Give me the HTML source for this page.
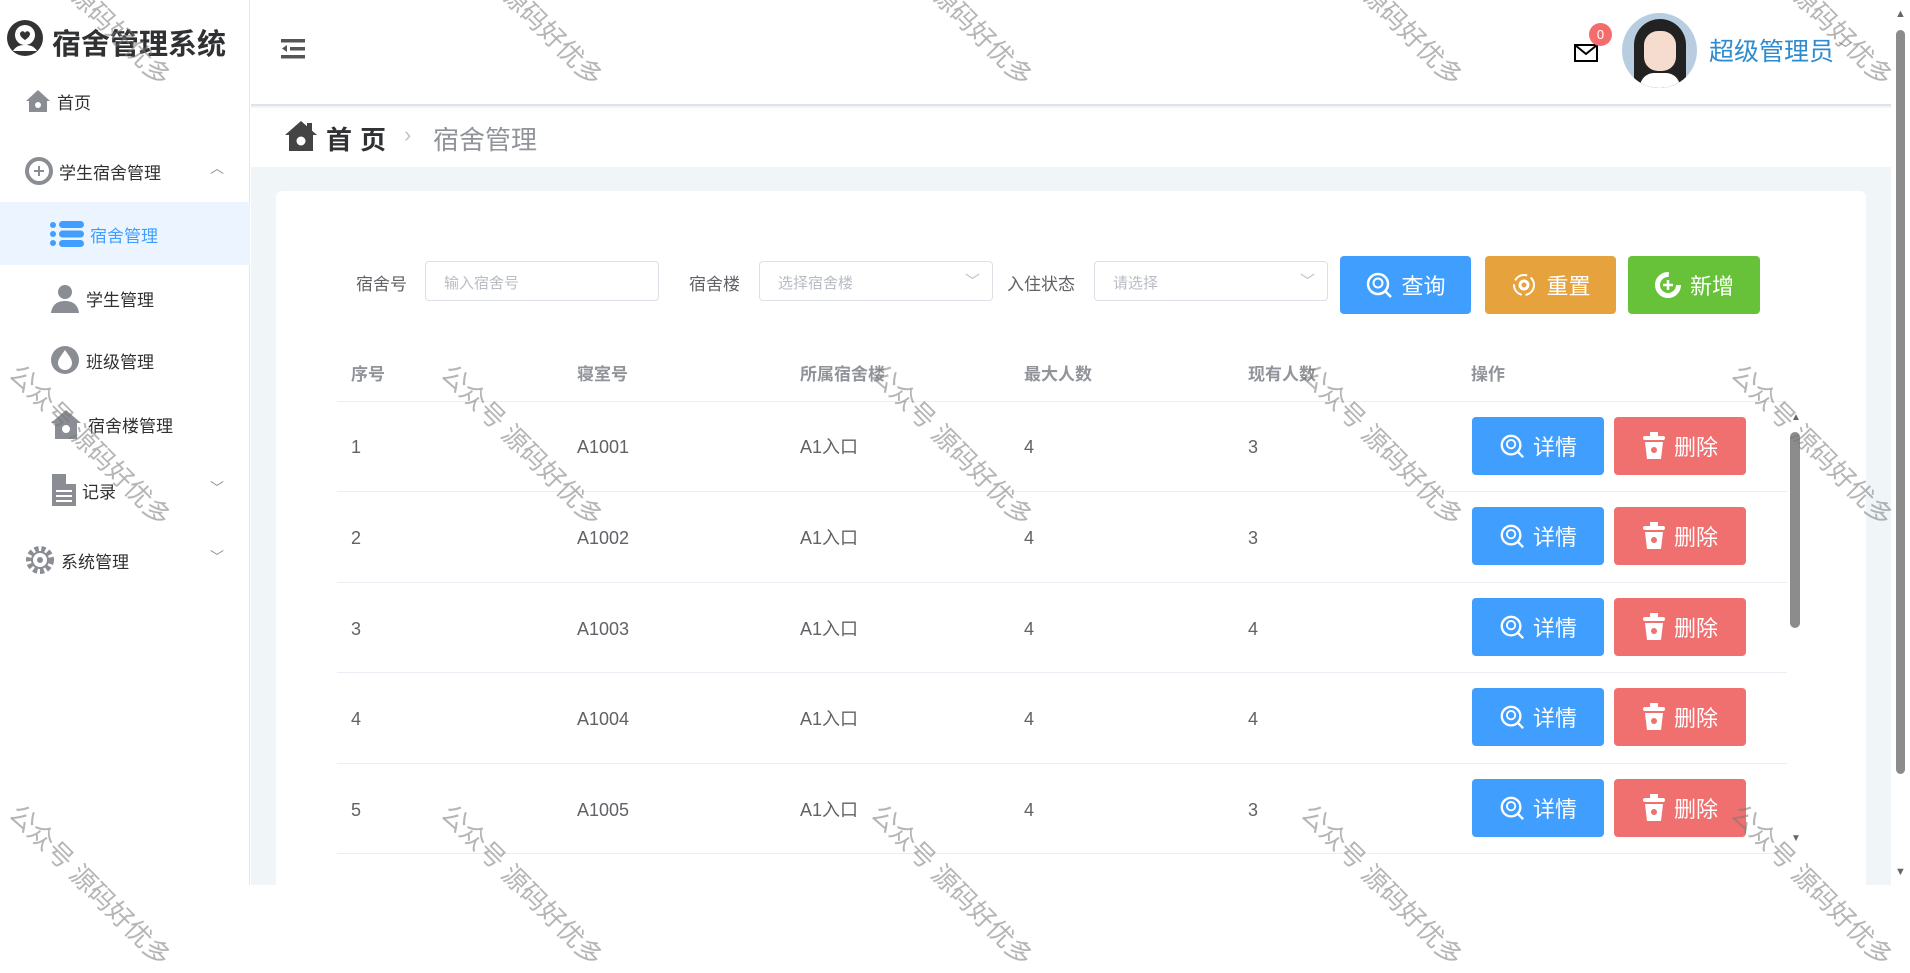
<!DOCTYPE html>
<html><head><meta charset="utf-8"><style>
*{box-sizing:border-box;margin:0;padding:0}
body{width:1910px;height:885px;overflow:hidden;background:#fff;font-family:"Liberation Sans","Noto Sans CJK SC",sans-serif;position:relative;color:#606266}
.abs{position:absolute}
.side{left:0;top:0;width:250px;height:885px;border-right:1px solid #e6e6e6;background:#fff}
.mi{position:absolute;font-size:17px;color:#303133;display:flex;align-items:center;gap:6px}
.main{left:251px;top:0;width:1640px;height:885px;background:#f0f5f8}
.hdr{left:251px;top:0;width:1640px;height:106px;background:#fff;border-bottom:2px solid #dde3e8}
.bc{left:251px;top:108px;width:1640px;height:59px;background:#fff}
.card{left:276px;top:191px;width:1590px;height:720px;background:#fff;border-radius:6px}
.lbl{font-size:17px;color:#606266;top:270px}
.inp{top:261px;height:40px;border:1px solid #dcdfe6;border-radius:4px;font-size:15px;color:#b8bcc4;padding:10px 18px}
.btn{position:absolute;height:58px;border-radius:4px;color:#fff;font-size:22px;display:flex;align-items:center;justify-content:center;gap:8px}
.blue{background:#409eff}.org{background:#e6a23c}.grn{background:#67c23a}.red{background:#f06f6f}
.th{top:360px;font-size:17px;font-weight:bold;color:#909399}
.td{font-size:18px;color:#606266;line-height:24px;height:24px;display:flex;align-items:center}
.line{left:337px;width:1450px;height:1px;background:#ebeef5}
.wm{position:absolute;font-size:26px;color:rgba(120,120,120,.55);transform:rotate(45deg);transform-origin:left top;white-space:nowrap}
</style></head><body>
<div class="abs main"></div>
<div class="abs hdr"></div>
<div class="abs bc"></div>
<div class="abs side"></div>

<svg class="abs" style="left:6px;top:19px" width="38" height="38" viewBox="0 0 38 38"><circle cx="19" cy="19" r="18" fill="#333"/><circle cx="19" cy="16" r="10" fill="#fff"/><path d="M14 15c0-3 4-4 5-1 1-3 5-2 5 1 0 3-5 6-5 6s-5-3-5-6z" fill="#333"/><path d="M7 32c3-5 7-6 12-6s9 1 12 6" fill="#fff"/></svg>
<div class="abs" style="left:52px;top:21px;font-size:29px;font-weight:bold;color:#303133">宿舍管理系统</div>

<div class="abs" style="left:0;top:202px;width:250px;height:63px;background:#ecf5ff"></div>
<div class="mi" style="left:25px;top:88px"><svg width="26" height="26" viewBox="0 0 26 26"><path d="M13 2L1 13h3v11h18V13h3z" fill="#8a8d93"/><circle cx="13" cy="17" r="3" fill="#fff"/></svg><span>首页</span></div>
<div class="mi" style="left:25px;top:157px"><svg width="28" height="28" viewBox="0 0 28 28"><circle cx="14" cy="14" r="12" fill="none" stroke="#8a8d93" stroke-width="4"/><path d="M14 9v10M9 14h10" stroke="#8a8d93" stroke-width="2"/></svg><span>学生宿舍管理</span></div>
<div class="abs" style="left:210px;top:158px;color:#909399;font-size:14px">︿</div>
<div class="mi" style="left:50px;top:220px;color:#409eff"><svg width="34" height="28" viewBox="0 0 34 28"><circle cx="3" cy="5" r="3" fill="#409eff"/><circle cx="3" cy="14" r="3" fill="#409eff"/><circle cx="3" cy="23" r="3" fill="#409eff"/><rect x="9" y="1" width="25" height="7" rx="3.5" fill="#409eff"/><rect x="9" y="10.5" width="25" height="7" rx="3.5" fill="#409eff"/><rect x="9" y="20" width="25" height="7" rx="3.5" fill="#409eff"/></svg><span>宿舍管理</span></div>
<div class="mi" style="left:50px;top:283px"><svg width="30" height="30" viewBox="0 0 30 30"><circle cx="15" cy="9" r="7" fill="#8a8d93"/><path d="M1 30c1-8 6-12 14-12s13 4 14 12z" fill="#8a8d93"/></svg><span>学生管理</span></div>
<div class="mi" style="left:50px;top:345px"><svg width="30" height="30" viewBox="0 0 30 30"><circle cx="15" cy="15" r="14" fill="#8a8d93"/><path d="M15 5c-4 6-7 9-7 13a7 7 0 0014 0c0-4-3-7-7-13z" fill="#fff"/></svg><span>班级管理</span></div>
<div class="mi" style="left:50px;top:409px"><svg width="32" height="30" viewBox="0 0 32 30"><path d="M16 1L1 14h4v16h22V14h4z" fill="#8a8d93"/><circle cx="16" cy="20" r="4" fill="#fff"/></svg><span>宿舍楼管理</span></div>
<div class="mi" style="left:52px;top:474px"><svg width="24" height="32" viewBox="0 0 24 32"><rect x="0" y="0" width="24" height="32" fill="#8a8d93"/><rect x="4" y="16" width="16" height="2" fill="#fff"/><rect x="4" y="21" width="16" height="2" fill="#fff"/><rect x="4" y="26" width="16" height="2" fill="#fff"/><rect x="14" y="0" width="10" height="10" fill="#fff"/></svg><span>记录</span></div>
<div class="abs" style="left:210px;top:478px;color:#909399;font-size:14px">﹀</div>
<div class="mi" style="left:25px;top:545px"><svg width="30" height="30" viewBox="0 0 30 30"><circle cx="15" cy="15" r="11" fill="none" stroke="#8a8d93" stroke-width="6" stroke-dasharray="4 2.6"/><circle cx="15" cy="15" r="8" fill="none" stroke="#8a8d93" stroke-width="2"/><circle cx="15" cy="15" r="3" fill="#8a8d93"/></svg><span>系统管理</span></div>
<div class="abs" style="left:210px;top:547px;color:#909399;font-size:14px">﹀</div>

<svg class="abs" style="left:281px;top:39px" width="24" height="20" viewBox="0 0 24 20"><rect x="0" y="0" width="24" height="3.5" fill="#555"/><rect x="9" y="8" width="15" height="3.5" fill="#555"/><rect x="0" y="16" width="24" height="3.5" fill="#555"/><path d="M6 6v7l-5-3.5z" fill="#555"/></svg>
<svg class="abs" style="left:1574px;top:44px" width="24" height="18" viewBox="0 0 24 18"><rect x="1" y="1" width="22" height="16" fill="none" stroke="#000" stroke-width="2"/><path d="M1 1l11 9 11-9" fill="none" stroke="#000" stroke-width="2"/></svg>
<div class="abs" style="left:1589px;top:23px;width:23px;height:23px;border-radius:50%;background:#f56c6c;color:#fff;font-size:13px;text-align:center;line-height:23px">0</div>
<div class="abs" style="left:1622px;top:13px;width:75px;height:75px;border-radius:50%;background:#b9cde0;overflow:hidden"><div class="abs" style="left:12px;top:6px;width:52px;height:72px;border-radius:26px 26px 10px 10px;background:#222"></div><div class="abs" style="left:22px;top:18px;width:32px;height:40px;border-radius:14px;background:#f6dccf"></div><div class="abs" style="left:18px;top:60px;width:40px;height:20px;border-radius:14px 14px 0 0;background:#fff"></div></div>
<div class="abs" style="left:1709px;top:32px;font-size:25px;color:#2f8bd0">超级管理员</div>
<div class="abs" style="left:1838px;top:38px;font-size:15px;color:#909399">﹀</div>

<svg class="abs" style="left:285px;top:120px" width="32" height="32" viewBox="0 0 32 32"><path d="M16 1L0 15h4v16h24V15h4z" fill="#444"/><circle cx="16" cy="21" r="4.5" fill="#fff"/><rect x="22" y="3" width="5" height="8" fill="#444"/></svg>
<div class="abs" style="left:326px;top:120px;font-size:26px;font-weight:bold;color:#303133;letter-spacing:8px">首页</div>
<div class="abs" style="left:404px;top:122px;font-size:22px;color:#c0c4cc">›</div>
<div class="abs" style="left:433px;top:120px;font-size:26px;color:#909399">宿舍管理</div>

<div class="abs card"></div>
<div class="abs lbl" style="left:356px">宿舍号</div>
<div class="abs inp" style="left:425px;width:234px">输入宿舍号</div>
<div class="abs lbl" style="left:689px">宿舍楼</div>
<div class="abs inp" style="left:759px;width:234px">选择宿舍楼<span style="position:absolute;right:12px;top:8px">﹀</span></div>
<div class="abs lbl" style="left:1007px">入住状态</div>
<div class="abs inp" style="left:1094px;width:234px">请选择<span style="position:absolute;right:12px;top:8px">﹀</span></div>

<div class="btn blue" style="left:1340px;top:256px;width:131px"><svg width="28" height="28" viewBox="0 0 28 28"><circle cx="13" cy="13" r="10" fill="none" stroke="#fff" stroke-width="2.5"/><circle cx="13" cy="12" r="4.5" fill="none" stroke="#fff" stroke-width="2"/><path d="M20 20l6 6" stroke="#fff" stroke-width="2.5"/></svg>查询</div>
<div class="btn org" style="left:1485px;top:256px;width:131px"><svg width="28" height="28" viewBox="0 0 28 28"><circle cx="14" cy="14" r="10" fill="none" stroke="#fff" stroke-width="2" stroke-dasharray="14 4"/><circle cx="14" cy="14" r="4" fill="none" stroke="#fff" stroke-width="3"/></svg>重置</div>
<div class="btn grn" style="left:1628px;top:256px;width:132px"><svg width="28" height="28" viewBox="0 0 28 28"><circle cx="14" cy="14" r="10.5" fill="none" stroke="#fff" stroke-width="5" stroke-dasharray="50 16"/><path d="M14 9v10M9 14h10" stroke="#fff" stroke-width="2.5"/></svg>新增</div>

<div class="abs th" style="left:351px">序号</div>
<div class="abs th" style="left:577px">寝室号</div>
<div class="abs th" style="left:800px">所属宿舍楼</div>
<div class="abs th" style="left:1024px">最大人数</div>
<div class="abs th" style="left:1248px">现有人数</div>
<div class="abs th" style="left:1471px">操作</div>
<div class="abs line" style="top:401px"></div>
<div class="abs line" style="top:491px"></div>
<div class="abs line" style="top:582px"></div>
<div class="abs line" style="top:672px"></div>
<div class="abs line" style="top:763px"></div>
<div class="abs line" style="top:853px"></div>

<div class="abs td" style="left:351px;top:435px">1</div><div class="abs td" style="left:577px;top:435px">A1001</div><div class="abs td" style="left:800px;top:435px">A1入口</div><div class="abs td" style="left:1024px;top:435px">4</div><div class="abs td" style="left:1248px;top:435px">3</div>
<div class="abs td" style="left:351px;top:526px">2</div><div class="abs td" style="left:577px;top:526px">A1002</div><div class="abs td" style="left:800px;top:526px">A1入口</div><div class="abs td" style="left:1024px;top:526px">4</div><div class="abs td" style="left:1248px;top:526px">3</div>
<div class="abs td" style="left:351px;top:617px">3</div><div class="abs td" style="left:577px;top:617px">A1003</div><div class="abs td" style="left:800px;top:617px">A1入口</div><div class="abs td" style="left:1024px;top:617px">4</div><div class="abs td" style="left:1248px;top:617px">4</div>
<div class="abs td" style="left:351px;top:707px">4</div><div class="abs td" style="left:577px;top:707px">A1004</div><div class="abs td" style="left:800px;top:707px">A1入口</div><div class="abs td" style="left:1024px;top:707px">4</div><div class="abs td" style="left:1248px;top:707px">4</div>
<div class="abs td" style="left:351px;top:798px">5</div><div class="abs td" style="left:577px;top:798px">A1005</div><div class="abs td" style="left:800px;top:798px">A1入口</div><div class="abs td" style="left:1024px;top:798px">4</div><div class="abs td" style="left:1248px;top:798px">3</div>

<div class="btn blue" style="left:1472px;top:417px;width:132px"><svg width="26" height="26" viewBox="0 0 28 28"><circle cx="13" cy="13" r="10" fill="none" stroke="#fff" stroke-width="2.5"/><circle cx="13" cy="12" r="4.5" fill="none" stroke="#fff" stroke-width="2"/><path d="M20 20l6 6" stroke="#fff" stroke-width="2.5"/></svg>详情</div>
<div class="btn red" style="left:1614px;top:417px;width:132px"><svg width="24" height="28" viewBox="0 0 24 28"><rect x="1" y="4" width="22" height="4" rx="2" fill="#fff"/><rect x="8" y="0" width="8" height="4" fill="#fff"/><path d="M3 10h18l-2 17H5z" fill="#fff"/><circle cx="12" cy="18" r="3" fill="#f06f6f"/></svg>删除</div>
<div class="btn blue" style="left:1472px;top:507px;width:132px"><svg width="26" height="26" viewBox="0 0 28 28"><circle cx="13" cy="13" r="10" fill="none" stroke="#fff" stroke-width="2.5"/><circle cx="13" cy="12" r="4.5" fill="none" stroke="#fff" stroke-width="2"/><path d="M20 20l6 6" stroke="#fff" stroke-width="2.5"/></svg>详情</div>
<div class="btn red" style="left:1614px;top:507px;width:132px"><svg width="24" height="28" viewBox="0 0 24 28"><rect x="1" y="4" width="22" height="4" rx="2" fill="#fff"/><rect x="8" y="0" width="8" height="4" fill="#fff"/><path d="M3 10h18l-2 17H5z" fill="#fff"/><circle cx="12" cy="18" r="3" fill="#f06f6f"/></svg>删除</div>
<div class="btn blue" style="left:1472px;top:598px;width:132px"><svg width="26" height="26" viewBox="0 0 28 28"><circle cx="13" cy="13" r="10" fill="none" stroke="#fff" stroke-width="2.5"/><circle cx="13" cy="12" r="4.5" fill="none" stroke="#fff" stroke-width="2"/><path d="M20 20l6 6" stroke="#fff" stroke-width="2.5"/></svg>详情</div>
<div class="btn red" style="left:1614px;top:598px;width:132px"><svg width="24" height="28" viewBox="0 0 24 28"><rect x="1" y="4" width="22" height="4" rx="2" fill="#fff"/><rect x="8" y="0" width="8" height="4" fill="#fff"/><path d="M3 10h18l-2 17H5z" fill="#fff"/><circle cx="12" cy="18" r="3" fill="#f06f6f"/></svg>删除</div>
<div class="btn blue" style="left:1472px;top:688px;width:132px"><svg width="26" height="26" viewBox="0 0 28 28"><circle cx="13" cy="13" r="10" fill="none" stroke="#fff" stroke-width="2.5"/><circle cx="13" cy="12" r="4.5" fill="none" stroke="#fff" stroke-width="2"/><path d="M20 20l6 6" stroke="#fff" stroke-width="2.5"/></svg>详情</div>
<div class="btn red" style="left:1614px;top:688px;width:132px"><svg width="24" height="28" viewBox="0 0 24 28"><rect x="1" y="4" width="22" height="4" rx="2" fill="#fff"/><rect x="8" y="0" width="8" height="4" fill="#fff"/><path d="M3 10h18l-2 17H5z" fill="#fff"/><circle cx="12" cy="18" r="3" fill="#f06f6f"/></svg>删除</div>
<div class="btn blue" style="left:1472px;top:779px;width:132px"><svg width="26" height="26" viewBox="0 0 28 28"><circle cx="13" cy="13" r="10" fill="none" stroke="#fff" stroke-width="2.5"/><circle cx="13" cy="12" r="4.5" fill="none" stroke="#fff" stroke-width="2"/><path d="M20 20l6 6" stroke="#fff" stroke-width="2.5"/></svg>详情</div>
<div class="btn red" style="left:1614px;top:779px;width:132px"><svg width="24" height="28" viewBox="0 0 24 28"><rect x="1" y="4" width="22" height="4" rx="2" fill="#fff"/><rect x="8" y="0" width="8" height="4" fill="#fff"/><path d="M3 10h18l-2 17H5z" fill="#fff"/><circle cx="12" cy="18" r="3" fill="#f06f6f"/></svg>删除</div>

<div class="abs" style="left:1790px;top:432px;width:10px;height:196px;border-radius:5px;background:#8c8c8c"></div>
<div class="abs" style="left:1791px;top:412px;font-size:10px;color:#666">▲</div>
<div class="abs" style="left:1791px;top:833px;font-size:10px;color:#666">▼</div>
<div class="abs" style="left:1891px;top:0;width:19px;height:885px;background:#fff"></div>
<div class="abs" style="left:1896px;top:30px;width:9px;height:744px;border-radius:5px;background:#8c8c8c"></div>
<div class="abs" style="left:1895px;top:8px;font-size:11px;color:#666">▲</div>
<div class="abs" style="left:1895px;top:866px;font-size:11px;color:#666">▼</div>

<div class="wm" style="left:28px;top:-85px">公众号 源码好优多</div>
<div class="wm" style="left:460px;top:-85px">公众号 源码好优多</div>
<div class="wm" style="left:890px;top:-85px">公众号 源码好优多</div>
<div class="wm" style="left:1320px;top:-85px">公众号 源码好优多</div>
<div class="wm" style="left:1750px;top:-85px">公众号 源码好优多</div>
<div class="wm" style="left:28px;top:355px">公众号 源码好优多</div>
<div class="wm" style="left:460px;top:355px">公众号 源码好优多</div>
<div class="wm" style="left:890px;top:355px">公众号 源码好优多</div>
<div class="wm" style="left:1320px;top:355px">公众号 源码好优多</div>
<div class="wm" style="left:1750px;top:355px">公众号 源码好优多</div>
<div class="wm" style="left:28px;top:795px">公众号 源码好优多</div>
<div class="wm" style="left:460px;top:795px">公众号 源码好优多</div>
<div class="wm" style="left:890px;top:795px">公众号 源码好优多</div>
<div class="wm" style="left:1320px;top:795px">公众号 源码好优多</div>
<div class="wm" style="left:1750px;top:795px">公众号 源码好优多</div>
</body></html>
